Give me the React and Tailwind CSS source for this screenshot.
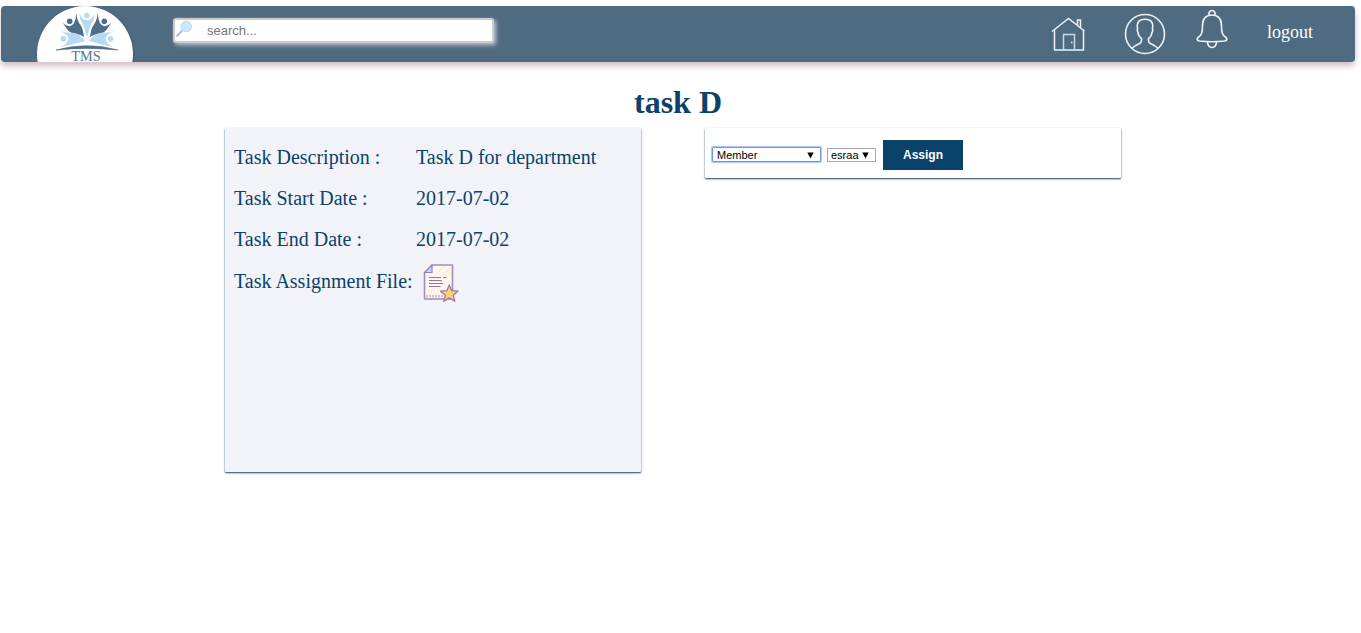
import React from "react";

function Logo() {
  return (
    <svg className="h-14 w-[100px] shrink-0 overflow-visible" viewBox="0 0 100 56" fill="none">
      <path d="M2.200 56A48 48 0 0 1 20 8.500L76 8A48 48 0 0 1 96.800 56Z" fill="#3c5368" opacity=".5" />
      <path d="M.67 56A48 48 0 1 1 95.330 56Z" fill="#fff" />
      <g fill="#4f6d86">
        <circle cx="32.700" cy="15.300" r="2.800" />
        <circle cx="67.300" cy="15.300" r="2.800" />
        <path d="M24.500 15Q27 19.500 32.500 20.200Q38.500 20 39.300 6.800Q40 15 43.500 19Q46 22.500 47 31Q43.500 28.500 39.500 28Q33 27.500 29.500 22.500Z" />
        <path d="M75.500 15Q73 19.500 67.500 20.200Q61.500 20 60.700 6.800Q60 15 56.500 19Q54 22.500 53 31Q56.500 28.500 60.500 28Q67 27.500 70.500 22.500Z" />
        <path d="M19 44Q50 35.500 81 44Q50 40.800 19 44Z" stroke="#4f6d86" strokeWidth=".6" />
      </g>
      <g fill="#b7daf2">
        <circle cx="49.900" cy="9.500" r="2.800" />
        <circle cx="26.300" cy="32.800" r="2.800" />
        <circle cx="73.500" cy="32.800" r="2.800" />
        <path d="M42.600 6.500Q44 14 50 14.200Q56 14 57.400 6.500Q58 13 54.500 17.500Q52.500 21 50.800 29.500H49.200Q47.500 21 45.500 17.500Q42 13 42.600 6.500Z" />
        <path d="M22.500 24.500Q28 27.200 36 26.700Q43 27.500 48 35Q43 36.500 36.500 38Q30 39.800 23.500 41Q30.500 38 31.500 33Q31 28.500 22.500 24.500Z" />
        <path d="M77.500 24.500Q72 27.200 64 26.700Q57 27.500 52 35Q57 36.500 63.500 38Q70 39.800 76.500 41Q69.500 38 68.500 33Q69 28.500 77.500 24.500Z" />
      </g>
      <text x="48.900" y="54.500" textAnchor="middle" fontSize="14.300" fill="#5c7488" fontFamily="Liberation Serif, serif">TMS</text>
    </svg>
  );
}

function SearchIcon() {
  return (
    <svg className="-mt-[3px] h-[18px] w-[18px] shrink-0" viewBox="0 0 18 18" fill="none">
      <path d="M1.500 16.500 7 10.500" stroke="#b3c2d6" strokeWidth="2.400" />
      <circle cx="11.200" cy="6.500" r="5.200" fill="#cbe8fd" stroke="#bdd3ea" />
    </svg>
  );
}

function HomeIcon() {
  return (
    <svg className="h-9 w-9" viewBox="0 0 36 36" fill="none" stroke="#edf3f7" strokeWidth="1.500">
      <path d="M1 15.500 17.500 2.500 33.500 15M3.500 14V34H32.500V14M26.500 9V4H29.500V11.500" />
      <path d="M12.500 34V18.500H23.500V34" stroke="#cdd8e0" />
      <path d="M20 26.500H21.500" />
    </svg>
  );
}

function UserIcon() {
  return (
    <svg className="h-[42px] w-[42px]" viewBox="0 0 42 42" fill="none" stroke="#edf3f7" strokeWidth="1.600">
      <circle cx="21" cy="21" r="19.500" />
      <path d="M8 35.500Q10 33 15.500 30.500Q17.500 29.500 17.500 27.500V25.500Q14.500 23.500 14 19.500Q12.800 18 13.500 15.500Q12 6.200 21 6.200Q30 6.200 28.500 15.500Q29.200 18 28 19.500Q27.500 23.500 24.500 25.500V27.500Q24.500 29.500 26.500 30.500Q32 33 34 35.500" />
    </svg>
  );
}

function BellIcon() {
  return (
    <svg className="h-10 w-8" viewBox="0 0 32 40" fill="none" stroke="#edf3f7" strokeWidth="1.600">
      <path d="M13.500 6.300A3 3 0 1 1 18.500 6.300M16 6C9 6 6.500 11 6.500 17C6.500 24 5.500 26 2 28.500C.6 30 1 31.500 3.500 32Q16 33.500 28.500 32C31 31.500 31.400 30 30 28.500C26.500 26 25.500 24 25.500 17C25.500 11 23 6 16 6Z" />
      <path d="M11.500 33Q12 38.500 16 38.500Q20 38.500 20.500 33" />
    </svg>
  );
}

function FileIcon() {
  return (
    <svg className="mt-1 h-[38px] w-9" viewBox="0 0 36 38" fill="none">
      <path d="M9 1H29.500V35H1.500V9Z" fill="#fff6ee" stroke="#a88bb9" strokeWidth="1.600" strokeLinejoin="round" />
      <path d="M13 10 22 2M18 12 28 3M23 13 28 8" stroke="#fceadb" strokeWidth="1.500" />
      <path d="M9 1V8.500H1.500Z" fill="#b9dcfb" stroke="#9a7fb4" strokeWidth="1.200" strokeLinejoin="round" />
      <path d="M6 13.500H18M20 13.500H23.500M6 16.500H19M6 19.500H20M6 22.500H17.500" stroke="#9371aa" strokeWidth="1.200" />
      <path d="M4 31V33.500M7 31V33.500M10 31V33.500M13 31V33.500M16 31V33.500M19 31V33.500" stroke="#a88bb9" strokeWidth="1" />
      <path d="M26.300 21 28.700 26.700 35 27.200 30.200 31.200 31.800 37.200 26.300 33.900 20.800 37.200 22.400 31.200 17.600 27.200 23.900 26.700Z" fill="#f9d27d" stroke="#9a7ba8" strokeWidth="1.300" strokeLinejoin="round" />
    </svg>
  );
}

function Arrow() {
  return (
    <svg className="h-[7px] w-[7px]" viewBox="0 0 7 7">
      <path d="M.3 .5H6.700L3.500 6.500Z" fill="#000" />
    </svg>
  );
}

function Row({ label, value }) {
  return (
    <div className="flex h-[41px] items-center">
      <span className="w-[182px] whitespace-nowrap">{label}</span>
      <span className="whitespace-nowrap">{value}</span>
    </div>
  );
}

export default function App() {
  return (
    <div className="min-h-[633px] bg-white pt-1.5 font-['Liberation_Serif',serif] text-[#0b426c]">
      <header className="ml-px flex h-14 w-[1354px] rounded-[4px] bg-[#4f6b81] pl-9 shadow-[0_4px_6px_rgba(139,92,115,0.4)]">
        <Logo />
        <div className="mt-3 ml-9 flex h-[25px] w-[321px] items-center rounded-[3px] border-2 border-[#ccc] bg-white font-['Liberation_Sans',sans-serif] text-[13px] shadow-[2px_2px_4px_#c4c4d4]">
          <SearchIcon />
          <input type="text" placeholder="search..." className="ml-[14px] min-w-0 flex-1 bg-transparent text-[#757575] outline-none placeholder:text-[#757575]" />
        </div>
        <nav className="ml-auto flex pr-[42px] text-white">
          <a href="#" className="mt-[10px]"><HomeIcon /></a>
          <a href="#" className="mt-[7px] ml-[37px]"><UserIcon /></a>
          <a href="#" className="mt-[3px] ml-[30px]"><BellIcon /></a>
          <a href="#" className="mt-4 ml-[39px] text-[18px] leading-5">logout</a>
        </nav>
      </header>

      <h1 className="mt-[22px] w-[1356px] text-center text-[32px] leading-[37px] font-bold">task D</h1>

      <main className="mt-[7px] ml-[225px] flex items-start gap-16">
        <section className="h-[344px] w-[416px] rounded-[1px] bg-[#f2f3f8] px-[9px] pt-2 text-[20px] shadow-[0_1px_2px_#0b426c]">
          <Row label="Task Description :" value="Task D for department" />
          <Row label="Task Start Date :" value="2017-07-02" />
          <Row label="Task End Date :" value="2017-07-02" />
          <div className="flex h-11 items-center">
            <span className="w-[189px] whitespace-nowrap">Task Assignment File:</span>
            <FileIcon />
          </div>
        </section>

        <section className="flex h-[50px] w-[416px] items-start rounded-[1px] bg-white pl-[7px] font-['Liberation_Sans',sans-serif] text-black shadow-[0_1px_2px_#0b426c]">
          <button className="mt-[19px] flex h-[15px] w-[109px] items-center justify-between rounded-[1px] border border-[#6f94dc] pt-px pr-1.5 pl-1 text-[11px] leading-none shadow-[0_0_1px_1px_#a9c5f8]">
            Member
            <Arrow />
          </button>
          <button className="mt-5 ml-1.5 flex h-3.5 w-[49px] items-center justify-between border border-[#a9a9a9] pr-1.5 pl-[3px] text-[11px] leading-none">
            esraa
            <Arrow />
          </button>
          <button className="mt-3 ml-[7px] h-[30px] w-20 bg-[#0b426c] text-[12px] font-bold text-white">Assign</button>
        </section>
      </main>
    </div>
  );
}
